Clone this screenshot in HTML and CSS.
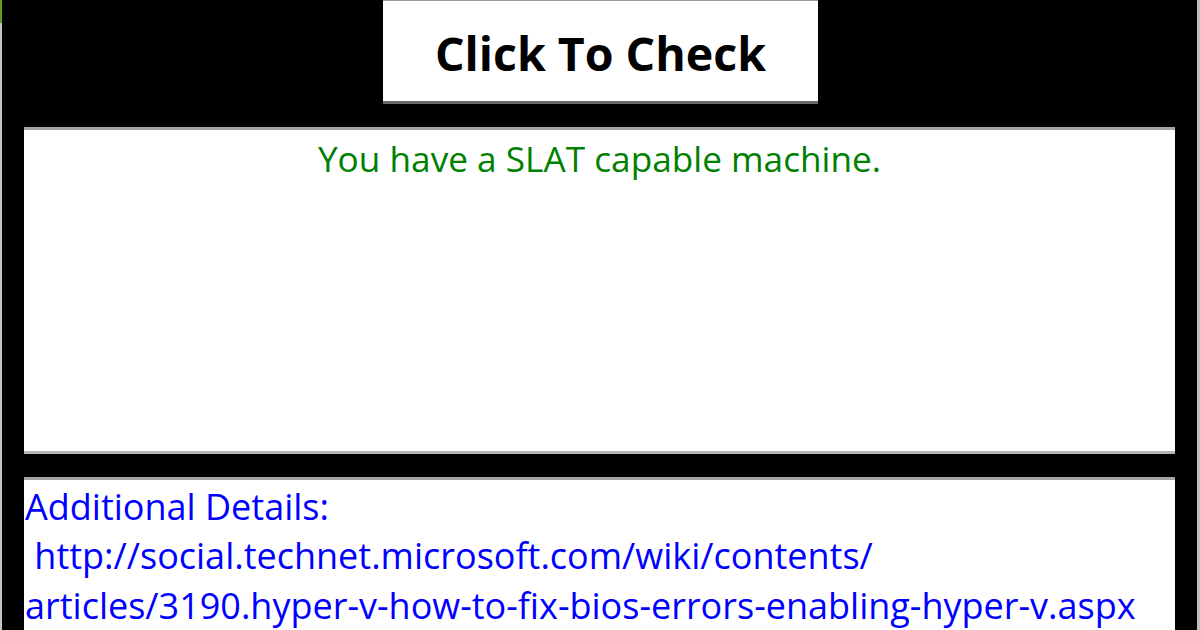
FILE: index.html
```html
<!DOCTYPE html>
<html>
<head>
<meta charset="utf-8">
<link rel="stylesheet" href="styles.css">
</head>
<body>
<div class="frame">
  <div class="edge-left"><div class="edge-green"></div></div>
  <div class="main">
    <div class="btn-row">
      <div class="btn">Click To Check</div>
    </div>
    <div class="result">You have a SLAT capable machine.</div>
    <div class="details">
      <div class="line">Additional Details:</div>
      <div class="line">&nbsp;http://social.technet.microsoft.com/wiki/contents/</div>
      <div class="line">articles/3190.hyper-v-how-to-fix-bios-errors-enabling-hyper-v.aspx</div>
    </div>
  </div>
  <div class="edge-right"></div>
</div>
</body>
</html>
```

FILE: styles.css
```css
html, body {
  margin: 0;
  padding: 0;
  background: #000;
  width: 1200px;
  height: 630px;
  overflow: hidden;
  font-family: "Open Sans", "Noto Sans", sans-serif;
}
.frame {
  display: flex;
  width: 1200px;
  height: 630px;
}
.edge-left {
  width: 2px;
  background: #c4c4c4;
  flex: none;
}
.edge-green {
  height: 23px;
  background: #6a9a1a;
}
.edge-right {
  width: 3px;
  background: #bdbdbd;
  flex: none;
  margin-left: auto;
}
.main {
  flex: none;
  width: 1151px;
  margin-left: 22px;
  display: flex;
  flex-direction: column;
}
.btn-row {
  display: flex;
  justify-content: center;
  height: 127px;
  align-items: flex-start;
}
.btn {
  width: 435px;
  height: 104px;
  box-sizing: border-box;
  background: #fff;
  border-top: 1px solid #9a9a9a;
  border-bottom: 3px solid #6a6a6a;
  display: flex;
  align-items: center;
  justify-content: center;
  font-weight: 700;
  font-size: 46.5px;
  color: #000;
  padding-top: 4px;
  margin-left: 2px;
}
.result {
  height: 328px;
  box-sizing: border-box;
  background: #fff;
  border-top: 3px solid #a4a4a4;
  border-bottom: 3px solid #b4b4b4;
  color: #008000;
  font-size: 35.2px;
  text-align: center;
  line-height: 56px;
  padding-top: 0;
}
.details {
  margin-top: 23px;
  flex: 1;
  background: #fff;
  border-top: 3px solid #a4a4a4;
  color: #0000ff;
  font-size: 36px;
  line-height: 49.5px;
  padding-left: 1px;
  padding-top: 2px;
}
.line {
  white-space: nowrap;
}
```
